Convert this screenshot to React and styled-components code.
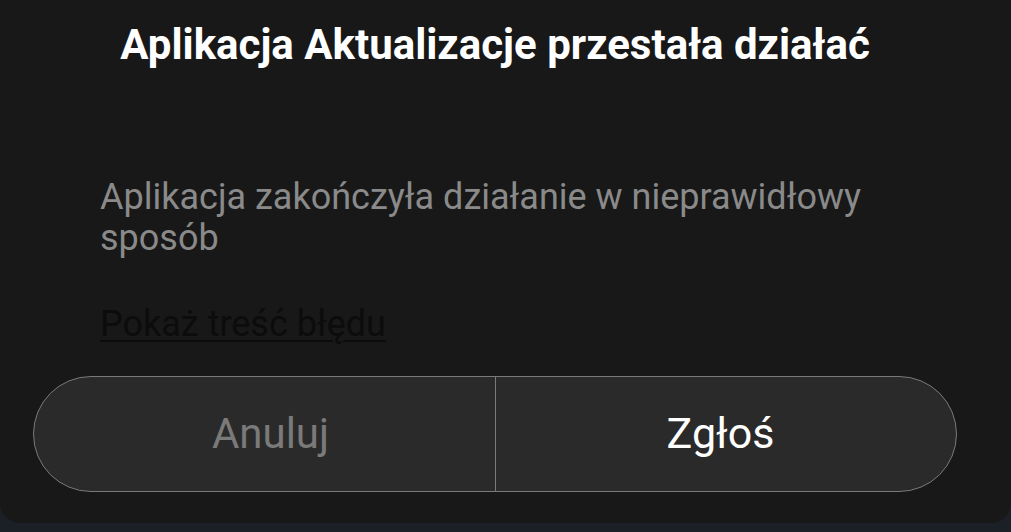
import React from "react";
import styled, { createGlobalStyle } from "styled-components";

const Global = createGlobalStyle`
  html, body { margin: 0; padding: 0; background: #1b2026; }
  body { font-family: Roboto, "Noto Sans", sans-serif; }
`;

const Dialog = styled.div`
  width: 1011px;
  height: 523px;
  box-sizing: border-box;
  background: #181818;
  border-bottom-right-radius: 20px;
  border-bottom-left-radius: 20px;
  padding: 0 54px 0 33px;
  display: flex;
  flex-direction: column;
`;

const Title = styled.h1`
  margin: 0;
  padding-top: 21px;
  text-align: center;
  color: #ffffff;
  font-family: Roboto, sans-serif;
  font-weight: 700;
  font-size: 42px;
  line-height: 48px;
  white-space: nowrap;
`;

const Body = styled.div`
  padding: 108px 0 0 67px;
  display: flex;
  flex-direction: column;
`;

const Message = styled.p`
  margin: 0;
  color: #8a8a8a;
  font-size: 36px;
  line-height: 41px;
  max-width: 820px;
`;

const Link = styled.a`
  margin-top: 45px;
  color: #0c0c0c;
  font-size: 36px;
  line-height: 40px;
  text-decoration: underline;
  text-decoration-thickness: 2px;
  text-underline-offset: 4px;
  align-self: flex-start;
`;

const ButtonBar = styled.div`
  margin-top: 32px;
  height: 116px;
  box-sizing: border-box;
  display: flex;
  background: #2a2a2a;
  border: 1px solid #7a7a7a;
  border-radius: 58px;
  overflow: hidden;
`;

const Button = styled.button`
  flex: 1 1 0;
  box-sizing: border-box;
  border: none;
  background: transparent;
  font-family: Roboto, sans-serif;
  font-size: ${(p) => (p.$primary ? "43px" : "42px")};
  color: ${(p) => (p.$primary ? "#ffffff" : "#7a7a7a")};
  border-left: ${(p) => (p.$divider ? "1px solid #7a7a7a" : "none")};
  padding: ${(p) => (p.$primary ? "0 11px 2px 0" : "0 0 2px 12px")};
`;

export default function App() {
  return (
    <>
      <Global />
      <Dialog>
        <Title>Aplikacja Aktualizacje przestała działać</Title>
        <Body>
          <Message>Aplikacja zakończyła działanie w nieprawidłowy sposób</Message>
          <Link>Pokaż treść błędu</Link>
        </Body>
        <ButtonBar>
          <Button>Anuluj</Button>
          <Button $primary $divider>Zgłoś</Button>
        </ButtonBar>
      </Dialog>
    </>
  );
}
